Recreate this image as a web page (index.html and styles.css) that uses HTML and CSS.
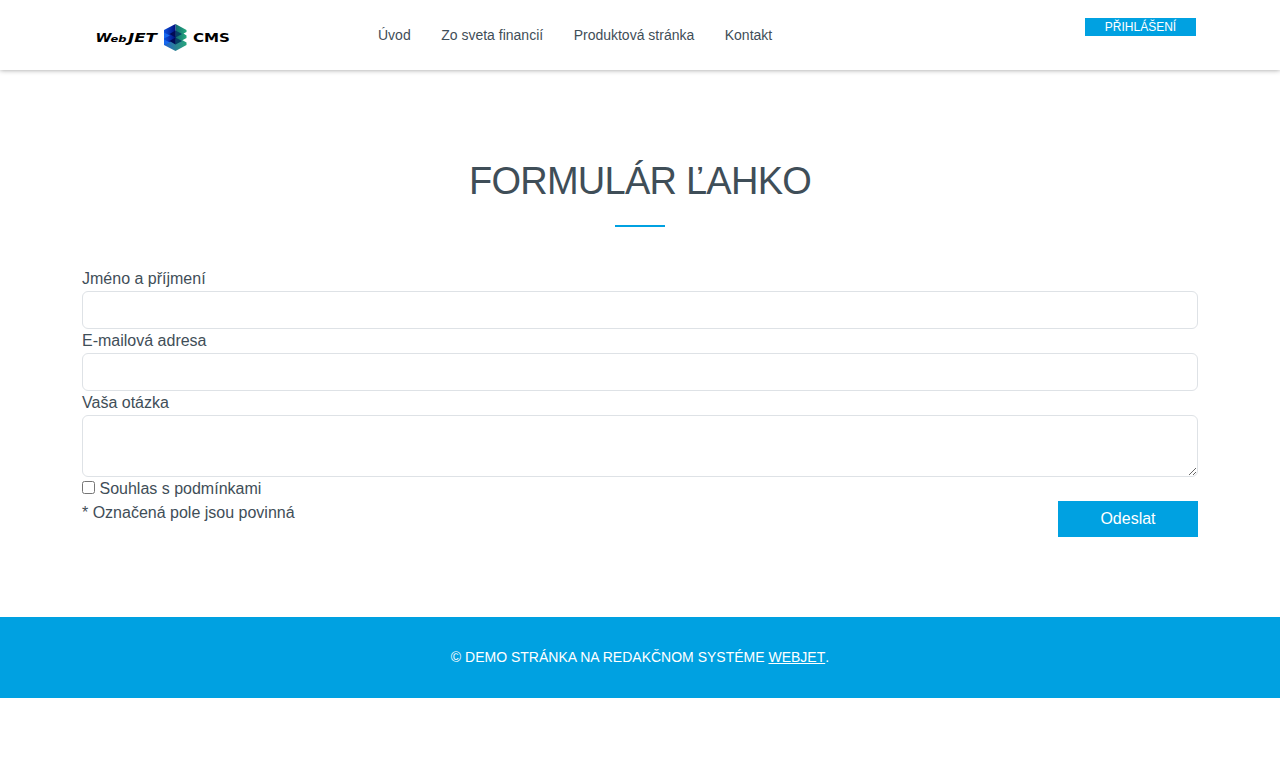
FILE: index.html
```html
<!DOCTYPE html>
<html lang="cs">
<head>
<meta charset="utf-8">
<title>Formulár ľahko</title>
<link rel="stylesheet" href="styles.css">
</head>
<body>
<header class="header">
  <a class="logo" href="#">
    <svg width="136" height="30" viewBox="0 0 136 30" role="img" aria-label="WebJET CMS">
      <defs>
        <linearGradient id="left" x1="0" y1="0" x2="1" y2="0"><stop offset="0" stop-color="#0b50e0"/><stop offset="1" stop-color="#02107c"/></linearGradient>
        <linearGradient id="right" x1="0" y1="0" x2="1" y2="0"><stop offset="0" stop-color="#126a72"/><stop offset="1" stop-color="#25ab7c"/></linearGradient>
        <linearGradient id="base" x1="0" y1="0" x2="1" y2="0"><stop offset="0" stop-color="#2160d4"/><stop offset=".55" stop-color="#2c8490"/><stop offset="1" stop-color="#25a67c"/></linearGradient>
      </defs>
      <g class="logo-text">
        <text class="slanted" x="0.5" y="19" textLength="16" lengthAdjust="spacingAndGlyphs">W</text>
        <text class="slanted small" x="15.500" y="19" textLength="16" lengthAdjust="spacingAndGlyphs">eb</text>
        <text class="slanted" x="33" y="19" textLength="29" lengthAdjust="spacingAndGlyphs">JET</text>
        <text x="98" y="19" textLength="37" lengthAdjust="spacingAndGlyphs">CMS</text>
      </g>
      <path fill="url(#base)" d="M69 16 80.500 13 88 17.500 91.500 19.500V22L80.500 28 69 22z"/>
      <path fill="url(#right)" d="M80.500 1 91.500 7V9L88.500 10.500 91.500 12.500V15L80.500 21z"/>
      <path fill="url(#left)" d="M80.500 1 69 7V22L80.500 16z"/>
      <path fill="#1768ef" d="M69 9.500 75 12.500 69 15.500zM69 16.500 75 19.500 69 22z"/>
      <path fill="#063f66" d="M80.500 7.500 87 11 80.500 14.500zM80.500 14.500 87 18 80.500 21.500z"/>
      <path fill="#020b55" d="M80.500 7.500 74.500 11 80.500 14.500zM80.500 14.500 74.500 18 80.500 21.500z"/>
    </svg>
  </a>
  <nav class="nav">
    <a href="#">Úvod</a>
    <a href="#">Zo sveta financií</a>
    <a href="#">Produktová stránka</a>
    <a href="#">Kontakt</a>
  </nav>
  <a class="login" href="#">Přihlášení</a>
</header>
<main class="content">
  <h1 class="title">Formulár ľahko</h1>
  <form class="form">
    <label for="name">Jméno a příjmení</label>
    <input class="field" id="name" type="text">
    <label for="email">E-mailová adresa</label>
    <input class="field" id="email" type="text">
    <label for="question">Vaša otázka</label>
    <textarea class="field area" id="question"></textarea>
    <div class="consent"><input type="checkbox" id="consent"> <label for="consent">Souhlas s podmínkami</label></div>
    <div class="actions">
      <span>* Označená pole jsou povinná</span>
      <button class="submit" type="button">Odeslat</button>
    </div>
  </form>
</main>
<footer class="footer">© Demo stránka na redakčnom systéme&nbsp;<a href="#">WebJET</a>.</footer>
</body>
</html>
```
FILE: styles.css
```css
* { box-sizing: border-box; }
body {
  margin: 0;
  background: #fff;
  color: #3f4e58;
  font: 16px/24px "Liberation Sans", Arial, sans-serif;
}
.header {
  display: flex;
  align-items: flex-start;
  height: 70px;
  padding: 0 84px 0 95px;
  background: #fff;
  box-shadow: 0 0 5px rgba(0, 0, 0, .4);
}
.logo { width: 283px; padding-top: 23px; line-height: 0; }
.logo-text { font: bold 13px "DejaVu Sans", Verdana, sans-serif; fill: #000; }
.slanted { font-style: italic; }
.small { font-size: 9.5px; }
.nav { display: flex; gap: 30.5px; padding-top: 25px; font-size: 14px; line-height: 20px; }
.nav a { color: inherit; text-decoration: none; }
.login {
  width: 111px;
  height: 18px;
  margin: 18px 0 0 auto;
  background: #00a1e1;
  color: #fff;
  font-size: 12px;
  line-height: 18px;
  text-align: center;
  text-decoration: none;
  text-transform: uppercase;
}
.content { padding: 80px 82px; }
.title {
  display: flex;
  flex-direction: column;
  align-items: center;
  margin: 0 0 40px;
  font-size: 38px;
  font-weight: 400;
  line-height: 62px;
  letter-spacing: -.75px;
  text-transform: uppercase;
}
.title::after { content: ""; width: 50px; height: 2px; margin-top: 13px; background: #00a1e1; }
.form { display: flex; flex-direction: column; }
.field {
  display: block;
  width: 100%;
  height: 38px;
  padding: 6px 12px;
  border: 1px solid #dee2e6;
  border-radius: 6px;
  background: #fff;
  color: inherit;
  font: inherit;
}
.area { height: 62px; resize: vertical; }
.consent input { width: 13px; height: 13px; margin: 0; }
.actions { display: flex; justify-content: space-between; align-items: flex-start; }
.submit {
  width: 140px;
  height: 36px;
  padding: 0;
  border: 0;
  background: #00a1e1;
  color: #fff;
  font: inherit;
}
.footer {
  display: flex;
  justify-content: center;
  align-items: center;
  height: 81px;
  background: #00a1e1;
  color: #fff;
  font-size: 14px;
  line-height: 21px;
  text-transform: uppercase;
}
.footer a { color: inherit; }
```
